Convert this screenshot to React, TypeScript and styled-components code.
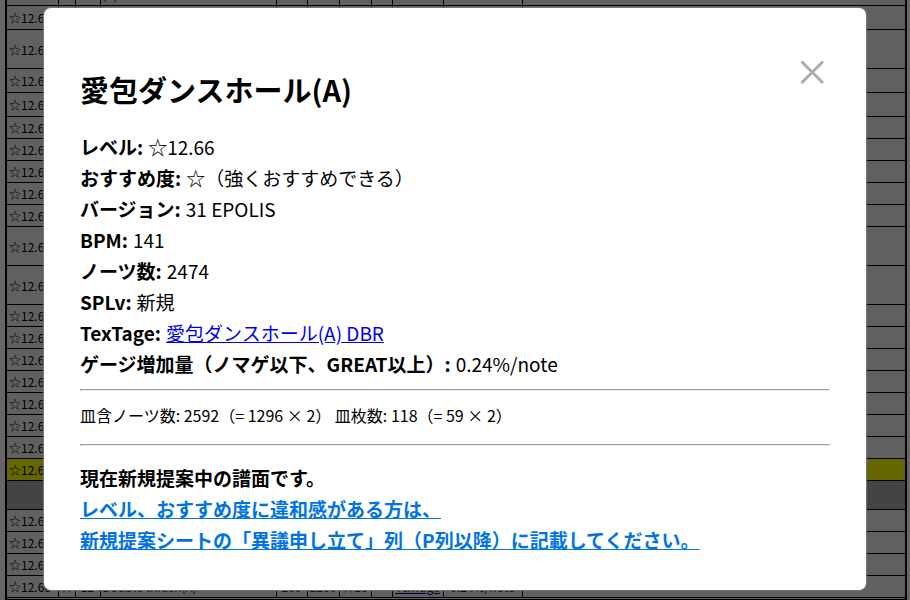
import React from "react";
import styled, { createGlobalStyle } from "styled-components";

const GlobalStyle = createGlobalStyle`
  * { box-sizing: border-box; }
  body {
    margin: 0;
    overflow: hidden;
    background: #fff;
    font-family: "Noto Sans CJK JP", sans-serif;
    color: #000;
  }
`;

const Page = styled.div`
  position: relative;
  height: 100vh;
  overflow: hidden;
`;

const ListWrap = styled.main`
  display: flex;
  flex-direction: column;
  justify-content: flex-end;
  height: 100vh;
  padding: 0 3px 0 5px;
`;

const SongTable = styled.table`
  width: 100%;
  border-collapse: collapse;
  table-layout: fixed;
  border: 2px solid #000;
  border-width: 0 2px;
  background: #f0f0f0;
  font-size: 12px;
  line-height: 17px;
`;

const SongRow = styled.tr<{ $height: number; $tone?: string }>`
  height: ${(p) => p.$height}px;
  background: ${(p) => p.$tone ?? "#f0f0f0"};
`;

const Cell = styled.td<{ $center?: boolean }>`
  padding: 0 2px;
  border: 1px solid #000;
  text-align: ${(p) => (p.$center ? "center" : "left")};
  white-space: nowrap;
  overflow: hidden;
`;

const NavyCell = styled(Cell)`
  color: #00008b;
`;

const TableLink = styled.a`
  color: #00008b;
`;

const Backdrop = styled.div`
  position: absolute;
  inset: 0;
  display: flex;
  align-items: flex-start;
  padding: 8px 44px;
  background: rgba(0, 0, 0, 0.6);
`;

const Dialog = styled.section`
  position: relative;
  flex: 1;
  padding: 60px 36px 35px;
  border-radius: 7px;
  background: #fff;
  box-shadow: 0 0 1px 1px #777;
`;

const CloseButton = styled.button`
  position: absolute;
  top: 50px;
  right: 40px;
  display: flex;
  width: 28px;
  height: 28px;
  padding: 0;
  border: 0;
  background: none;
`;

const Title = styled.h1`
  margin: 0 0 20px;
  font-size: 29px;
  line-height: 43px;
  font-weight: 700;
`;

const Details = styled.dl`
  margin: 0;
  font-size: 19px;
  line-height: 31px;
`;

const Detail = styled.div`
  display: flex;
  gap: 5px;
`;

const Term = styled.dt`
  font-weight: 700;
`;

const Value = styled.dd`
  margin: 0;
`;

const ChartLink = styled.a`
  color: #00e;
`;

const Rule = styled.hr`
  margin: 10px 0 0;
`;

const Counts = styled.p`
  margin: 0;
  padding: 12px 0 7px;
  font-size: 16px;
  line-height: 24px;
`;

const Notice = styled.p`
  margin: 16px 0 0;
  font-size: 19px;
  line-height: 31px;
  font-weight: 700;
`;

const SheetLink = styled.a`
  color: #0073e6;
`;

const columnWidths = [52, 17, 25, 176, 31, 32, 32, 21, 51, 79];

const rows: { height: number; tone?: string }[] = [
  { height: 24 },
  { height: 39 },
  { height: 24 },
  { height: 24 },
  ...Array.from({ length: 5 }, () => ({ height: 22 })),
  { height: 39 },
  { height: 39 },
  ...Array.from({ length: 7 }, () => ({ height: 22 })),
  { height: 22, tone: "#ff0" },
  { height: 29, tone: "#aaa" },
  ...Array.from({ length: 3 }, () => ({ height: 22 })),
];

const details: { term: string; value: React.ReactNode }[] = [
  { term: "レベル:", value: "☆12.66" },
  { term: "おすすめ度:", value: "☆（強くおすすめできる）" },
  { term: "バージョン:", value: "31 EPOLIS" },
  { term: "BPM:", value: "141" },
  { term: "ノーツ数:", value: "2474" },
  { term: "SPLv:", value: "新規" },
  { term: "TexTage:", value: <ChartLink href="#chart">愛包ダンスホール(A) DBR</ChartLink> },
  { term: "ゲージ増加量（ノマゲ以下、GREAT以上）:", value: "0.24%/note" },
];

function SongList() {
  return (
    <ListWrap aria-hidden="true">
      <SongTable>
        <colgroup>
          {columnWidths.map((w, i) => <col key={i} width={w} />)}
          <col />
        </colgroup>
        <tbody>
          <SongRow $height={22}>
            <Cell />
            <Cell />
            <Cell />
            <NavyCell>(A)</NavyCell>
            {columnWidths.slice(3).map((_, i) => <Cell key={i} />)}
          </SongRow>
          {rows.map((row, i) => (
            <SongRow key={i} $height={row.height} $tone={row.tone}>
              {row.tone === "#aaa" ? <Cell colSpan={11} /> : (
                <>
                  <Cell>☆12.66</Cell>
                  {columnWidths.map((_, c) => <Cell key={c} />)}
                </>
              )}
            </SongRow>
          ))}
          <SongRow $height={22}>
            <Cell>☆12.66</Cell>
            <Cell $center>☆</Cell>
            <Cell $center>12</Cell>
            <NavyCell>Double thrash(A)</NavyCell>
            <NavyCell $center>200</NavyCell>
            <NavyCell $center>2200</NavyCell>
            <NavyCell $center>☆10</NavyCell>
            <Cell />
            <Cell $center><TableLink href="#textage">TexTage</TableLink></Cell>
            <Cell $center>0.24%/note</Cell>
            <Cell />
          </SongRow>
          <SongRow $height={2}><Cell colSpan={11} /></SongRow>
        </tbody>
      </SongTable>
    </ListWrap>
  );
}

export default function App() {
  return (
    <Page>
      <GlobalStyle />
      <SongList />
      <Backdrop>
        <Dialog role="dialog" aria-modal="true" aria-labelledby="song-title">
          <CloseButton type="button" aria-label="閉じる">
            <svg width="28" height="28" viewBox="0 0 28 28" aria-hidden="true">
              <path d="M3.5 3.5 25 25M25 3.5 3.5 25" stroke="#aaa" strokeWidth="2.8" />
            </svg>
          </CloseButton>
          <Title id="song-title">愛包ダンスホール(A)</Title>
          <Details>
            {details.map((d) => (
              <Detail key={d.term}>
                <Term>{d.term}</Term>
                <Value>{d.value}</Value>
              </Detail>
            ))}
          </Details>
          <Rule />
          <Counts>皿含ノーツ数: 2592（= 1296 × 2） 皿枚数: 118（= 59 × 2）</Counts>
          <Rule />
          <Notice>
            現在新規提案中の譜面です。<br />
            <SheetLink href="#sheet">
              レベル、おすすめ度に違和感がある方は、<br />
              新規提案シートの「異議申し立て」列（P列以降）に記載してください。
            </SheetLink>
          </Notice>
        </Dialog>
      </Backdrop>
    </Page>
  );
}
